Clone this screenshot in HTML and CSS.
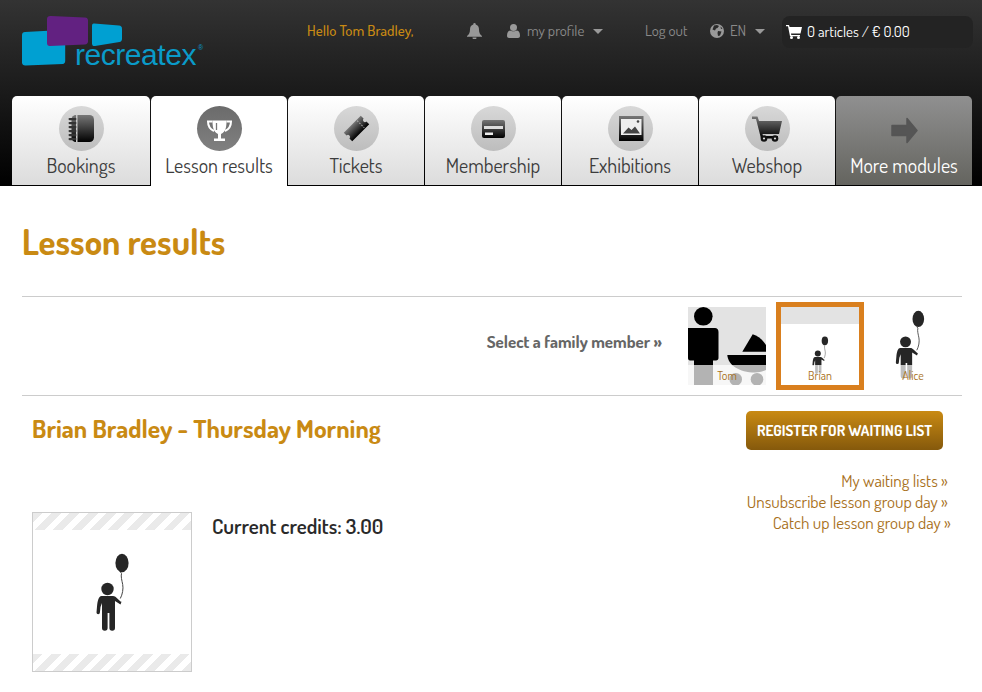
FILE: index.html
```html
<!DOCTYPE html>
<html lang="en">
<head>
<meta charset="utf-8">
<title>Lesson results</title>
<link rel="stylesheet" href="styles.css">
</head>
<body>
<svg class="defs" width="0" height="0" aria-hidden="true">
  <defs>
    <linearGradient id="ig" x1="0" y1="0" x2="0" y2="1"><stop offset="0" stop-color="#777"/><stop offset="1" stop-color="#000"/></linearGradient>
    <symbol id="child" viewBox="0 0 160 160">
      <ellipse cx="90" cy="51" rx="6.600" ry="9.200" fill="#262626"/>
      <path d="M88.500 60l1 1.500c-.8 3 .4 7 1.200 11 .8 4-.2 10-2.400 14" fill="none" stroke="#444" stroke-width="1"/>
      <circle cx="75.500" cy="77" r="6.200" fill="#262626"/>
      <path d="M69 84h12c1.500 0 2.500.8 3.500 1.800l4 3.700 1 .3-1 2.700-5.500-3.500V116a2.800 2.800 0 0 1-5.600 0V101h-1.800v15a2.800 2.800 0 0 1-5.600 0V91l-1.500 4-.6 5.500a1.700 1.700 0 0 1-3.400 0l.6-7c.5-4 1.400-9.500 4.400-9.500z" fill="#262626"/>
    </symbol>
  </defs>
</svg>

<header class="site-header">
  <div class="top-bar">
    <a class="logo" href="#">
      <svg class="logo-mark" width="190" height="56" viewBox="0 0 190 56">
        <path d="M3 16l37-2c2-.1 3.200 1 3.200 3V45c0 1.800-1 2.800-2.500 3L3.500 49.500C1.500 49.600 0 48.500 0 46.500V19c0-1.800 1.200-2.900 3-3z" fill="#00a0d2"/>
        <path d="M29 0l34 1.500c1.800.1 3 1.200 3 3v21c0 1.700-1.200 2.800-3 3L28 30c-2 .1-3-1-3-3V3c0-2 1.500-3.100 4-3z" fill="#622181"/>
        <path d="M72 7.500l25 2c1.800.2 3 1.200 3 3V23c0 1.600-1 2.700-2.500 3L73 30c-2 .2-3-.8-3-2.600V10c0-1.700 .5-2.600 2-2.500z" fill="#00a0d2"/>
      </svg>
      <span class="logo-word">recreatex<sup class="logo-reg">®</sup></span>
    </a>
    <span class="hello">Hello Tom Bradley,</span>
    <svg class="ic bell" width="15" height="16" viewBox="0 0 15 16"><path d="M7.500 0a1.300 1.300 0 0 1 1.200 1.500C11 2 12 4 12 6.500c0 3 .8 5 3 6.500v.8H0V13c2.200-1.500 3-3.500 3-6.500C3 4 4 2 6.300 1.500A1.300 1.300 0 0 1 7.500 0zM5.500 14.500h4a2 2 0 0 1-4 0z" fill="#999"/></svg>
    <svg class="ic user" width="13" height="14" viewBox="0 0 13 14"><circle cx="6.500" cy="3.500" r="3.500" fill="#999"/><path d="M0 12c0-3.500 1-5 3-5.500 1 1 5.500 1 7 0 2 .5 3 2 3 5.500 0 1.300-1 2-2 2H2c-1 0-2-.7-2-2z" fill="#999"/></svg>
    <span class="nav-link profile">my profile</span>
    <span class="caret caret-profile"></span>
    <span class="nav-link logout">Log out</span>
    <svg class="ic globe" width="14" height="14" viewBox="0 0 14 14"><circle cx="7" cy="7" r="7" fill="#999"/><path d="M4 1.500L7 1l2 1-1.500 2-1.500.500-1 2-2.500-1zM8 7l3.500.500L10 11.500 8 12l-.5-3zM10.500 2.500L12.500 4.500 11 5z" fill="#2a2a2a"/></svg>
    <span class="nav-link lang">EN</span>
    <span class="caret caret-lang"></span>
    <div class="cart">
      <svg class="cart-ic" width="16" height="14" viewBox="0 0 16 14"><path d="M0 0h3l.6 2H16l-1.500 6.500H5l.3 1.500H14v1.300H4L2 1.300H0z" fill="#fff"/><circle cx="5.500" cy="12.500" r="1.500" fill="#fff"/><circle cx="12.500" cy="12.500" r="1.500" fill="#fff"/></svg>
      <span>0 articles / € 0.00</span>
    </div>
  </div>

  <nav class="tabs">
    <a class="tab tab-first" href="#">
      <span class="disc">
        <svg width="45" height="45" viewBox="0 0 45 45"><rect x="12.500" y="9" width="22.500" height="27" rx="4.500" fill="url(#ig)"/><path d="M17 9h1.500v27H17z" fill="#c8c8c8"/><g fill="#333"><rect x="9.500" y="12" width="8" height="2.200" rx="1.100"/><rect x="9.500" y="16" width="8" height="2.200" rx="1.100"/><rect x="9.500" y="20" width="8" height="2.200" rx="1.100"/><rect x="9.500" y="24" width="8" height="2.200" rx="1.100"/><rect x="9.500" y="28" width="8" height="2.200" rx="1.100"/><rect x="9.500" y="32" width="8" height="2.200" rx="1.100"/></g></svg>
      </span>
      <span class="tab-label">Bookings</span>
    </a>
    <a class="tab tab-active" href="#">
      <span class="disc disc-active">
        <svg width="45" height="45" viewBox="0 0 45 45"><path d="M15.500 14.500h14c0 6-.5 11-5.500 13.500v4.500h4V35H17v-2.500h4V28c-5-2.500-5.500-7.500-5.500-13.500z" fill="#fff"/><path d="M15.500 15.500H11c0 5 2.500 8 6 9.500M29.500 15.500H34c0 5-2.500 8-6 9.500" fill="none" stroke="#fff" stroke-width="2"/><path d="M19.500 17v7" stroke="#777" stroke-width="1.300"/></svg>
      </span>
      <span class="tab-label">Lesson results</span>
    </a>
    <a class="tab" href="#">
      <span class="disc">
        <svg width="45" height="45" viewBox="0 0 45 45"><g transform="rotate(-45 22.500 22.500)"><path d="M10.500 16.500h24v4a2 2 0 0 0 0 4v4h-24v-4a2 2 0 0 0 0-4z" fill="url(#ig)"/><path d="M28.500 17.500v10" stroke="#aaa" stroke-width="1" stroke-dasharray="1.500 1.500"/></g></svg>
      </span>
      <span class="tab-label">Tickets</span>
    </a>
    <a class="tab" href="#">
      <span class="disc">
        <svg width="45" height="45" viewBox="0 0 45 45"><rect x="11" y="14" width="23" height="18" rx="2" fill="url(#ig)"/><path d="M13 20h19v3H13z" fill="#ddd"/><path d="M14 26.500h8V29h-8z" fill="#eee"/></svg>
      </span>
      <span class="tab-label">Membership</span>
    </a>
    <a class="tab" href="#">
      <span class="disc">
        <svg width="45" height="45" viewBox="0 0 45 45"><rect x="11" y="10" width="24.500" height="25" fill="url(#ig)"/><path d="M13 13h20.500v16H13z" fill="#eee"/><path d="M15 27.500l5.500-6 3 2.500 3.500-3.500 5 7z" fill="#444"/><circle cx="30" cy="15.500" r="1.300" fill="#444"/></svg>
      </span>
      <span class="tab-label">Exhibitions</span>
    </a>
    <a class="tab" href="#">
      <span class="disc">
        <svg width="45" height="45" viewBox="0 0 45 45"><path d="M7 10.500h5.500l1.500 4.500h23l-3 13H17.500l.5 2h15v2.500H16L11 13H7z" fill="url(#ig)"/><circle cx="19" cy="32.500" r="3.300" fill="#111"/><circle cx="30" cy="32.500" r="3.300" fill="#111"/><circle cx="19" cy="32.500" r="1.100" fill="#ddd"/><circle cx="30" cy="32.500" r="1.100" fill="#ddd"/></svg>
      </span>
      <span class="tab-label">Webshop</span>
    </a>
    <a class="tab tab-more" href="#">
      <span class="disc disc-more">
        <svg width="45" height="45" viewBox="0 0 45 45"><path d="M10 19.500h15v-7l10 12-10 12v-7H10z" fill="#555" stroke="#555" stroke-width="1.500" stroke-linejoin="round"/></svg>
      </span>
      <span class="tab-label">More modules</span>
    </a>
  </nav>
</header>

<main class="content">
  <h1 class="page-title">Lesson results</h1>

  <section class="family">
    <span class="family-label">Select a family member »</span>
    <a class="member" href="#">
      <span class="thumb thumb-grey">
        <svg class="thumb-art" width="78" height="78" viewBox="0 0 78 78">
          <circle cx="15.300" cy="9.300" r="9.300" fill="#000"/>
          <path d="M3 21h24c2 0 3.500 1.500 3.500 4v26c0 1.500-1 2.500-2.500 2.500H25V78H6V53.500H2c-1.200 0-2-1-2-2.500V21z" fill="#000"/>
          <path d="M54.300 44.700L64.700 27.300C70 29 75 33 78 38v6.700z" fill="#000"/>
          <path d="M39.300 48H78v15c-3 1.500-7 2.500-11 2.500C51 65.500 40 58 39.300 48z" fill="#000"/>
          <circle cx="47.700" cy="72.300" r="6.300" fill="#000"/>
          <circle cx="69" cy="72.300" r="6.300" fill="#000"/>
        </svg>
        <span class="thumb-name">Tom</span>
      </span>
    </a>
    <a class="member member-active" href="#">
      <span class="thumb thumb-band">
        <svg class="thumb-art art-small" width="78" height="78"><use href="#child"/></svg>
        <span class="thumb-name">Brian</span>
      </span>
    </a>
    <a class="member" href="#">
      <span class="thumb">
        <svg class="thumb-art art-large" width="141" height="141"><use href="#child"/></svg>
        <span class="thumb-name">Alice</span>
      </span>
    </a>
  </section>

  <section class="detail">
    <div class="detail-head">
      <h2 class="detail-title">Brian Bradley - Thursday Morning</h2>
      <a class="btn" href="#">REGISTER FOR WAITING LIST</a>
    </div>
    <ul class="links">
      <li class="link-a"><a href="#">My waiting lists »</a></li>
      <li class="link-a"><a href="#">Unsubscribe lesson group day »</a></li>
      <li><a href="#">Catch up lesson group day »</a></li>
    </ul>
    <div class="profile-row">
      <div class="photo">
        <svg width="158" height="158"><use href="#child" x="-1" y="-1" width="160" height="160"/></svg>
      </div>
      <p class="credits">Current credits: 3.00</p>
    </div>
  </section>
</main>
</body>
</html>
```
FILE: styles.css
```css
* { box-sizing: border-box; }
html, body { margin: 0; padding: 0; }
body {
  width: 982px;
  height: 692px;
  overflow: hidden;
  background: #fff;
  color: #333;
  font-family: "Dosis", "Liberation Sans Narrow", "Lato", sans-serif;
}
a { color: inherit; text-decoration: none; }
.defs { position: absolute; }

.site-header {
  height: 186px;
  background: linear-gradient(#333 0%, #1a1a1a 50%, #000 100%);
}
.top-bar {
  display: flex;
  align-items: flex-start;
  height: 96px;
  padding-left: 22px;
  font-size: 15px;
  line-height: 18px;
}
.logo { position: relative; display: block; flex: none; width: 190px; height: 56px; margin-top: 16px; }
.logo-mark { display: block; }
.logo-word {
  position: absolute;
  left: 53px;
  top: 24px;
  font-family: "Liberation Sans", sans-serif;
  font-size: 30px;
  line-height: 30px;
  letter-spacing: -.45px;
  color: #0a9bc9;
}
.logo-reg { font-size: 7px; position: absolute; top: 0; margin-left: 2px; letter-spacing: 0; line-height: 16px; }
.hello { margin: 22px 0 0 95px; width: 107px; color: #c98a13; font-weight: 500; white-space: nowrap; }
.ic { flex: none; display: block; }
.bell { margin: 23px 0 0 53px; }
.user { margin: 24px 0 0 25px; }
.nav-link { margin-top: 22px; color: #8a8a8a; white-space: nowrap; }
.profile { width: 57px; margin-left: 7px; }
.caret { flex: none; width: 0; height: 0; margin-top: 29px; border: 5px solid transparent; border-top-color: #999; border-bottom-width: 0; }
.caret-profile { margin-left: 9px; }
.logout { width: 43px; margin-left: 42px; }
.globe { margin: 24px 0 0 22px; }
.lang { width: 16px; margin-left: 6px; }
.caret-lang { margin-left: 9px; }
.cart {
  display: flex;
  align-items: center;
  gap: 5px;
  flex: none;
  width: 191px;
  height: 32px;
  margin: 16px 0 0 17px;
  padding: 0 0 1px 4px;
  border-radius: 8px;
  background: #232323;
  color: #fff;
  white-space: nowrap;
}
.cart-ic { flex: none; }

.tabs { display: flex; height: 90px; padding-left: 12px; gap: 1px; }
.tab {
  display: flex;
  flex-direction: column;
  align-items: center;
  width: 136px;
  height: 90px;
  padding-top: 10px;
  border-radius: 5px 5px 0 0;
  border-bottom: 1px solid #000;
  background: linear-gradient(#fff, #dcdcdc);
  color: #3c3c3c;
}
.tab-first { width: 138px; }
.tab-active { background: #fff; border-bottom-color: #fff; }
.tab-more { background: linear-gradient(#909090, #64645f); color: #fff; }
.disc {
  display: block;
  flex: none;
  width: 45px;
  height: 45px;
  border-radius: 50%;
  background: linear-gradient(#d8d8d8, #bdbdbd);
}
.disc svg { display: block; }
.disc-active { background: linear-gradient(#6b6b6b, #808080); }
.disc-more { background: none; }
.tab-label { margin-top: 1px; font-size: 20px; line-height: 26px; white-space: nowrap; }

.content { padding: 0 20px 0 22px; }
.page-title { margin: 0; height: 110px; padding-top: 35px; font-size: 35px; line-height: 40px; font-weight: 700; color: #c98a13; }
.family {
  display: flex;
  align-items: center;
  gap: 5px;
  height: 100px;
  padding-right: 5px;
  border-top: 1px solid #ccc;
  border-bottom: 1px solid #ccc;
}
.family-label { margin: 0 16px 10px auto; font-size: 17px; font-weight: 700; color: #666; white-space: nowrap; }
.member { display: block; flex: none; padding: 5px; margin-top: -1px; }
.member-active { outline: 5px solid #d97f1e; outline-offset: -5px; }
.thumb { position: relative; display: block; width: 78px; height: 78px; overflow: hidden; background: #fff; }
.thumb-grey { background: #e3e3e3; }
.thumb-band { background: linear-gradient(#e3e3e3 17px, #fff 17px); }
.thumb-art { position: absolute; left: 0; top: 0; display: block; }
.art-small { top: 9px; }
.art-large { left: -35px; top: -33px; }
.thumb-name {
  position: absolute;
  left: 0;
  right: 0;
  bottom: 0;
  height: 20px;
  background: rgba(255, 255, 255, .7);
  color: #a8701a;
  font-size: 12px;
  line-height: 22px;
  text-align: center;
}

.detail { padding: 0 10px; }
.detail-head { display: flex; justify-content: space-between; align-items: flex-start; height: 69px; padding: 15px 9px 0 0; }
.detail-title { margin: -2px 0 0; font-size: 25.6px; line-height: 38px; font-weight: 700; color: #c98a13; white-space: nowrap; }
.btn {
  display: block;
  width: 197px;
  height: 39px;
  border-radius: 5px;
  background: linear-gradient(#c98a13, #85590c);
  color: #fff;
  font-size: 15px;
  font-weight: 700;
  line-height: 39px;
  text-align: center;
  white-space: nowrap;
}
.links { margin: 5px 0 -5px; padding: 0 1px 0 0; list-style: none; height: 0; text-align: right; font-size: 17px; line-height: 21px; color: #a8701a; }
.link-a { padding-right: 3px; }
.profile-row { display: flex; align-items: flex-start; gap: 20px; padding-top: 47px; }
.photo {
  width: 160px;
  height: 160px;
  flex: none;
  border: 1px solid #ccc;
  background:
    repeating-linear-gradient(135deg, #eaeaea 0 7px, #fff 7px 13px) top / 100% 17px no-repeat,
    repeating-linear-gradient(135deg, #eaeaea 0 7px, #fff 7px 13px) bottom / 100% 17px no-repeat;
}
.photo svg { display: block; }
.credits { margin: 2px 0 0; font-size: 21px; line-height: 24px; font-weight: 600; color: #2a2a2a; white-space: nowrap; }
```
